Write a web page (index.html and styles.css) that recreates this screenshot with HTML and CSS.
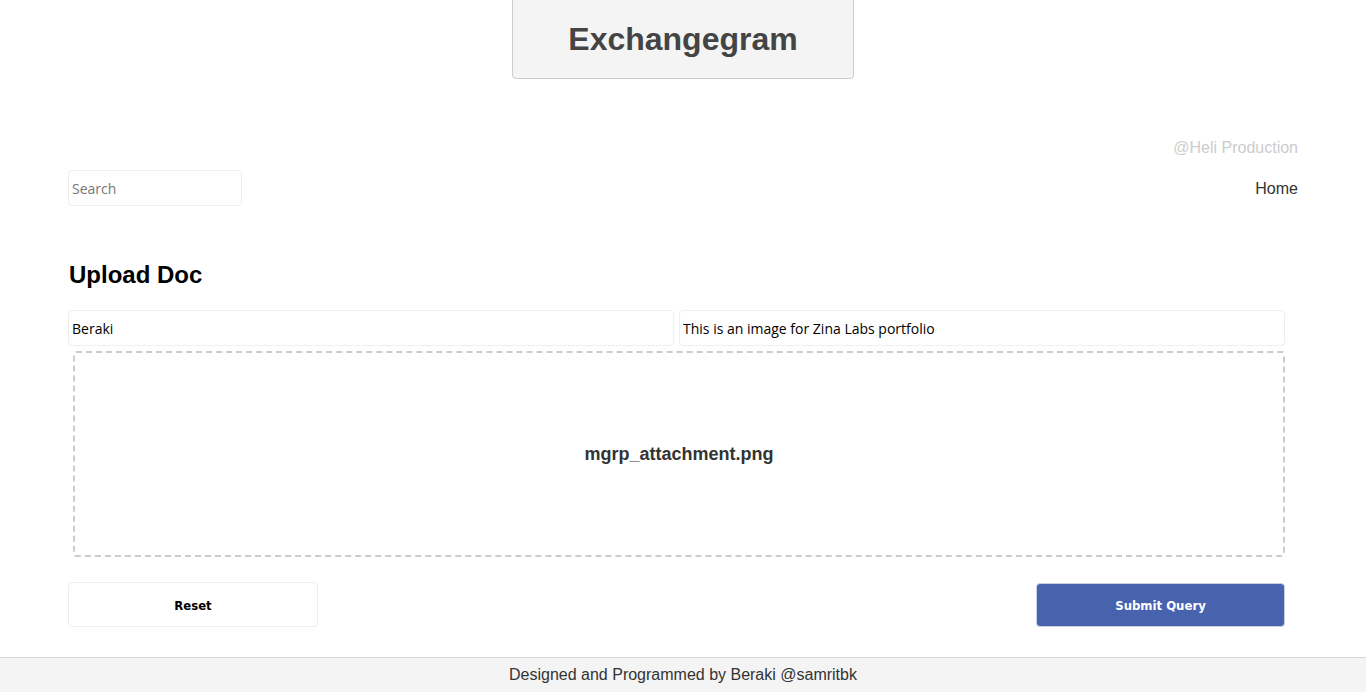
FILE: index.html
```html
<!DOCTYPE html>
<html>
<head>
<meta charset="utf-8">
<title>Exchangegram</title>
<link rel="stylesheet" href="styles.css">
</head>
<body>
<div class="page">
  <header class="brand-wrap">
    <div class="brand">Exchangegram</div>
  </header>
  <main class="container">
    <div class="credit">@Heli Production</div>
    <nav class="nav">
      <input class="search" type="text" placeholder="Search">
      <a class="home" href="#">Home</a>
    </nav>
    <section class="upload">
      <h2 class="title">Upload Doc</h2>
      <form class="form">
        <div class="fields">
          <input class="field" type="text" value="Beraki">
          <input class="field" type="text" value="This is an image for Zina Labs portfolio">
        </div>
        <div class="drop">mgrp_attachment.png</div>
        <div class="actions">
          <button type="reset" class="btn reset">Reset</button>
          <button type="button" class="btn submit">Submit Query</button>
        </div>
      </form>
    </section>
  </main>
  <footer class="footer">Designed and Programmed by Beraki @samritbk</footer>
</div>
</body>
</html>
```
FILE: styles.css
```css
* { box-sizing: border-box; }
html, body { margin: 0; padding: 0; }
body {
  font-family: "Liberation Sans", Arial, sans-serif;
  color: #333;
  background: #fff;
}
.page {
  min-height: 692px;
  display: flex;
  flex-direction: column;
}
.brand-wrap {
  display: flex;
  justify-content: center;
}
.brand {
  width: 342px;
  height: 80px;
  margin-top: -1px;
  background: #f4f4f4;
  border: 1px solid #ccc;
  border-radius: 0 0 4px 4px;
  display: flex;
  align-items: center;
  justify-content: center;
  font-size: 32px;
  font-weight: bold;
  color: #444;
  padding-top: 1px;
}
.container {
  width: 1230px;
  margin: 0 auto;
  flex: 1;
}
.credit {
  text-align: right;
  color: #ccc;
  font-size: 16px;
  margin-top: 60px;
  line-height: 18px;
}
.nav {
  display: flex;
  justify-content: space-between;
  align-items: center;
  margin-top: 13px;
}
.search, .field {
  height: 36px;
  border: 1px solid #eee;
  border-radius: 4px;
  padding: 0 3px;
  font-family: "Comic Sans MS", "Open Sans", sans-serif;
  font-size: 14px;
  color: #000;
  background: #fff;
  outline: none;
}
.search { width: 174px; }
.search::placeholder { color: #777; }
.home {
  color: #333;
  text-decoration: none;
  font-size: 16px;
  padding-top: 2px;
}
.upload { width: 1217px; }
.title {
  margin: 55px 0 21px 1px;
  font-size: 24px;
  line-height: 28px;
  font-weight: bold;
  color: #000;
}
.fields {
  display: flex;
  gap: 5px;
}
.field { flex: 1; }
.drop {
  margin: 5px 0 0 5px;
  height: 206px;
  border: 2px dashed #ccc;
  border-radius: 3px;
  display: flex;
  align-items: center;
  justify-content: center;
  font-size: 18px;
  font-weight: bold;
  color: #333;
}
.actions {
  display: flex;
  justify-content: space-between;
  margin-top: 25px;
}
.btn {
  width: 250px;
  height: 45px;
  border-radius: 4px;
  font-family: Tahoma, "DejaVu Sans Condensed", "DejaVu Sans", sans-serif;
  font-size: 13px;
  font-weight: bold;
  padding-top: 2px;
}
.reset {
  background: #fff;
  border: 1px solid #eee;
  color: #000;
}
.submit {
  width: 249px;
  height: 44px;
  margin-top: 1px;
  background: #4863ae;
  border: 1px solid #c8cfe6;
  color: #fff;
}
.footer {
  height: 35px;
  background: #f4f4f4;
  border-top: 1px solid #d5d5d5;
  display: flex;
  align-items: center;
  justify-content: center;
  font-size: 16px;
  color: #333;
}
```
